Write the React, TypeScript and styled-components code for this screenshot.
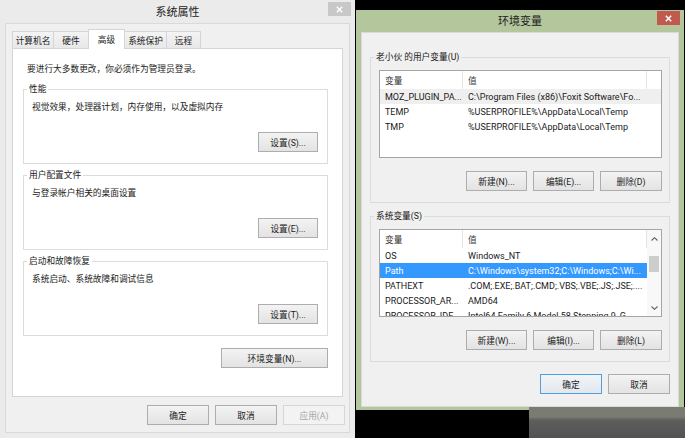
import styled, { createGlobalStyle, css } from "styled-components";

const GlobalStyle = createGlobalStyle`
  * { box-sizing: border-box; }
  html, body { margin: 0; padding: 0; background: #000; }
  body {
    font-family: Roboto, "Noto Sans CJK SC", sans-serif;
    font-size: 8.7px;
    color: #1a1a1a;
  }
`;

type Tone = "grey" | "green";

const Screen = styled.div`
  display: flex;
  width: 685px;
  height: 438px;
  overflow: hidden;
  background: #000;
`;

const Window = styled.div<{ $tone: Tone; $w: number; $h: number }>`
  display: flex;
  flex-direction: column;
  flex-shrink: 0;
  width: ${(p) => p.$w}px;
  height: ${(p) => p.$h}px;
  background: ${(p) => (p.$tone === "green" ? "#b4c69c" : "#ebebeb")};
`;

const TitleBar = styled.div<{ $h: number }>`
  display: grid;
  grid-template-columns: 1fr auto 1fr;
  height: ${(p) => p.$h}px;
  flex-shrink: 0;
`;

const Title = styled.div`
  grid-column: 2;
  align-self: center;
  padding-top: 2px;
  font-size: 11px;
  line-height: 14px;
  color: #222;
`;

const CloseButton = styled.div<{ $tone: Tone; $top: number }>`
  grid-column: 3;
  justify-self: end;
  align-self: start;
  margin: ${(p) => p.$top}px 4px 0 0;
  width: 23px;
  height: 14px;
  display: flex;
  align-items: center;
  justify-content: center;
  background: ${(p) => (p.$tone === "green" ? "#bf5a4c" : "#c8c8c8")};
`;

const Client = styled.div<{ $pad: string; $bottom: number }>`
  flex: 1;
  display: flex;
  flex-direction: column;
  margin: 0 5px ${(p) => p.$bottom}px;
  padding: ${(p) => p.$pad};
  background: #f0f0f0;
  box-shadow: inset 0 0 0 1px #dadada;
`;

const TabStrip = styled.div`
  display: flex;
  align-items: flex-end;
  height: 19px;
  flex-shrink: 0;
`;

const Tab = styled.div<{ $w: number; $active?: boolean }>`
  width: ${(p) => p.$w}px;
  height: 17px;
  display: flex;
  align-items: center;
  justify-content: center;
  border: 1px solid #d5d5d5;
  border-bottom: none;
  background: linear-gradient(#f4f4f4, #e8e8e8);
  white-space: nowrap;
  & + & { margin-left: -1px; }
  ${(p) =>
    p.$active &&
    css`
      position: relative;
      z-index: 1;
      height: 20px;
      margin-bottom: -1px;
      padding-bottom: 1px;
      background: #fff;
    `}
`;

const TabPanel = styled.div`
  flex: 1;
  display: flex;
  flex-direction: column;
  margin-right: 2px;
  padding: 14px 14px 0 10px;
  background: #fff;
  border: 1px solid #d5d5d5;
`;

const Text = styled.div<{ $indent?: number; $mt?: number }>`
  line-height: 12px;
  white-space: nowrap;
  margin-left: ${(p) => p.$indent ?? 0}px;
  margin-top: ${(p) => p.$mt ?? 0}px;
`;

const Group = styled.div<{ $mt: number; $padRight: number }>`
  display: flex;
  flex-direction: column;
  margin-top: ${(p) => p.$mt}px;
  padding: 0 ${(p) => p.$padRight}px 11px 8px;
  border: 1px solid #dcdcdc;
`;

const Legend = styled.div<{ $bg: string }>`
  align-self: flex-start;
  margin: -7px 0 0 -5px;
  padding: 0 2px;
  line-height: 12px;
  white-space: nowrap;
  background: ${(p) => p.$bg};
`;

const ButtonRow = styled.div<{ $mt: number }>`
  display: flex;
  justify-content: flex-end;
  gap: 6px;
  margin-top: ${(p) => p.$mt}px;
`;

type ButtonKind = "normal" | "default" | "disabled";

const Button = styled.button<{ $w: number; $kind?: ButtonKind }>`
  width: ${(p) => p.$w}px;
  height: 20px;
  padding: 0;
  display: flex;
  align-items: center;
  justify-content: center;
  font: inherit;
  color: #1a1a1a;
  white-space: nowrap;
  border: 1px solid #adadad;
  background: linear-gradient(#f3f3f3, #e3e3e3);
  ${(p) =>
    p.$kind === "default" &&
    css`
      border-color: #4f9de6;
      background: linear-gradient(#f1f4f7, #e3e8ed);
    `}
  ${(p) =>
    p.$kind === "disabled" &&
    css`
      color: #a6a6a6;
      border-color: #d6d6d6;
      background: #f3f3f3;
    `}
`;

const RightArea = styled.div`
  flex: 1;
  display: flex;
  flex-direction: column;
  padding: 10px 1px 0;
  background: #000;
`;

const BottomStrip = styled.div`
  flex: 1;
  display: flex;
  justify-content: flex-end;
`;

const Smudge = styled.div`
  position: relative;
  z-index: 1;
  width: 156px;
  height: 31px;
  margin: -3px -1px 0 0;
  background: linear-gradient(180deg, #7a7b73 0%, #7a7b73 32%, #5e5e5e 42%, #525252 100%);
`;

const ListView = styled.div`
  display: flex;
  height: 88px;
  margin-top: 7px;
  border: 1px solid #a5a5a5;
  background: #fff;
  overflow: hidden;
`;

const ListBody = styled.div`
  flex: 1;
  min-width: 0;
  display: flex;
  flex-direction: column;
  overflow: hidden;
`;

const HeaderRow = styled.div`
  display: grid;
  grid-template-columns: 83px 184px;
  height: 18px;
  flex-shrink: 0;
`;

const HeaderCell = styled.div`
  display: flex;
  align-items: center;
  padding-left: 5px;
  color: #3a3a3a;
  border-right: 1px solid #e5e5e5;
`;

type RowState = "selected" | "muted" | undefined;

const Row = styled.div<{ $state?: RowState }>`
  display: grid;
  grid-template-columns: 83px 184px;
  height: 15px;
  flex-shrink: 0;
  align-items: center;
  font-size: 9px;
  ${(p) => p.$state === "muted" && css`background: #efefef;`}
  ${(p) =>
    p.$state === "selected" &&
    css`
      background: #3399ff;
      color: #fff;
    `}
`;

const Cell = styled.div`
  padding-left: 5px;
  white-space: nowrap;
  overflow: hidden;
`;

const ScrollBar = styled.div`
  width: 14px;
  display: flex;
  flex-direction: column;
  background: #f8f8f8;
`;

const ScrollArrow = styled.div`
  height: 17px;
  display: flex;
  align-items: center;
  justify-content: center;
`;

const ScrollTrack = styled.div`
  flex: 1;
  padding-top: 9px;
`;

const Thumb = styled.div`
  width: 10px;
  height: 16px;
  margin: 0 auto;
  background: #cdcdcd;
`;

const CloseIcon = () => (
  <svg width="7" height="7" viewBox="0 0 7 7">
    <path d="M0.8 0.8 L6.2 6.2 M6.2 0.8 L0.8 6.2" stroke="#fff" strokeWidth="1.5" />
  </svg>
);

const Chevron = ({ up }: { up?: boolean }) => (
  <svg width="7" height="4" viewBox="0 0 7 4">
    <path d={up ? "M0.5 3.5 L3.5 0.7 L6.5 3.5" : "M0.5 0.5 L3.5 3.3 L6.5 0.5"} stroke="#606060" strokeWidth="1.1" fill="none" />
  </svg>
);

type EnvVar = { name: string; value: string; state?: RowState };

const userVars: EnvVar[] = [
  { name: "MOZ_PLUGIN_PA...", value: "C:\\Program Files (x86)\\Foxit Software\\Fo...", state: "muted" },
  { name: "TEMP", value: "%USERPROFILE%\\AppData\\Local\\Temp" },
  { name: "TMP", value: "%USERPROFILE%\\AppData\\Local\\Temp" },
];

const systemVars: EnvVar[] = [
  { name: "OS", value: "Windows_NT" },
  { name: "Path", value: "C:\\Windows\\system32;C:\\Windows;C:\\Wi...", state: "selected" },
  { name: "PATHEXT", value: ".COM;.EXE;.BAT;.CMD;.VBS;.VBE;.JS;.JSE;...." },
  { name: "PROCESSOR_AR...", value: "AMD64" },
  { name: "PROCESSOR_IDE...", value: "Intel64 Family 6 Model 58 Stepping 9, G..." },
];

const tabs = [
  { label: "计算机名", w: 42 },
  { label: "硬件", w: 36 },
  { label: "高级", w: 37, active: true },
  { label: "系统保护", w: 43 },
  { label: "远程", w: 35 },
];

const groups = [
  { title: "性能", text: "视觉效果，处理器计划，内存使用，以及虚拟内存", button: "设置(S)...", mt: 14 },
  { title: "用户配置文件", text: "与登录帐户相关的桌面设置", button: "设置(E)...", mt: 11 },
  { title: "启动和故障恢复", text: "系统启动、系统故障和调试信息", button: "设置(T)...", mt: 11 },
];

const VarList = ({ rows, scroll }: { rows: EnvVar[]; scroll?: boolean }) => (
  <ListView>
    <ListBody>
      <HeaderRow>
        <HeaderCell>变量</HeaderCell>
        <HeaderCell>值</HeaderCell>
      </HeaderRow>
      {rows.map((r) => (
        <Row key={r.name} $state={r.state}>
          <Cell>{r.name}</Cell>
          <Cell>{r.value}</Cell>
        </Row>
      ))}
    </ListBody>
    {scroll && (
      <ScrollBar>
        <ScrollArrow>
          <Chevron up />
        </ScrollArrow>
        <ScrollTrack>
          <Thumb />
        </ScrollTrack>
        <ScrollArrow>
          <Chevron />
        </ScrollArrow>
      </ScrollBar>
    )}
  </ListView>
);

const SystemProperties = () => (
  <Window $tone="grey" $w={355} $h={438}>
    <TitleBar $h={23}>
      <Title>系统属性</Title>
      <CloseButton $tone="grey" $top={2}>
        <CloseIcon />
      </CloseButton>
    </TitleBar>
    <Client $pad="6px 5px 8px 7px" $bottom={5}>
      <TabStrip>
        {tabs.map((t) => (
          <Tab key={t.label} $w={t.w} $active={t.active}>
            {t.label}
          </Tab>
        ))}
      </TabStrip>
      <TabPanel>
        <Text $indent={4}>要进行大多数更改，你必须作为管理员登录。</Text>
        {groups.map((g) => (
          <Group key={g.title} $mt={g.mt} $padRight={9}>
            <Legend $bg="#fff">{g.title}</Legend>
            <Text $mt={6}>{g.text}</Text>
            <ButtonRow $mt={19}>
              <Button $w={60}>{g.button}</Button>
            </ButtonRow>
          </Group>
        ))}
        <ButtonRow $mt={12}>
          <Button $w={107}>环境变量(N)...</Button>
        </ButtonRow>
      </TabPanel>
      <ButtonRow $mt={8}>
        <Button $w={62}>确定</Button>
        <Button $w={62}>取消</Button>
        <Button $w={62} $kind="disabled">
          应用(A)
        </Button>
      </ButtonRow>
    </Client>
  </Window>
);

const EnvironmentVariables = () => (
  <RightArea>
    <Window $tone="green" $w={328} $h={400}>
      <TitleBar $h={22}>
        <Title>环境变量</Title>
        <CloseButton $tone="green" $top={1}>
          <CloseIcon />
        </CloseButton>
      </TitleBar>
      <Client $pad="25px 9px 11px" $bottom={3}>
        <Group $mt={0} $padRight={7}>
          <Legend $bg="#f0f0f0">老小伙 的用户变量(U)</Legend>
          <VarList rows={userVars} />
          <ButtonRow $mt={13}>
            <Button $w={61}>新建(N)...</Button>
            <Button $w={61}>编辑(E)...</Button>
            <Button $w={62}>删除(D)</Button>
          </ButtonRow>
        </Group>
        <Group $mt={13} $padRight={7}>
          <Legend $bg="#f0f0f0">系统变量(S)</Legend>
          <VarList rows={systemVars} scroll />
          <ButtonRow $mt={13}>
            <Button $w={61}>新建(W)...</Button>
            <Button $w={61}>编辑(I)...</Button>
            <Button $w={62}>删除(L)</Button>
          </ButtonRow>
        </Group>
        <ButtonRow $mt={12}>
          <Button $w={62} $kind="default">
            确定
          </Button>
          <Button $w={62}>取消</Button>
        </ButtonRow>
      </Client>
    </Window>
    <BottomStrip>
      <Smudge />
    </BottomStrip>
  </RightArea>
);

export default function App() {
  return (
    <>
      <GlobalStyle />
      <Screen>
        <SystemProperties />
        <EnvironmentVariables />
      </Screen>
    </>
  );
}
